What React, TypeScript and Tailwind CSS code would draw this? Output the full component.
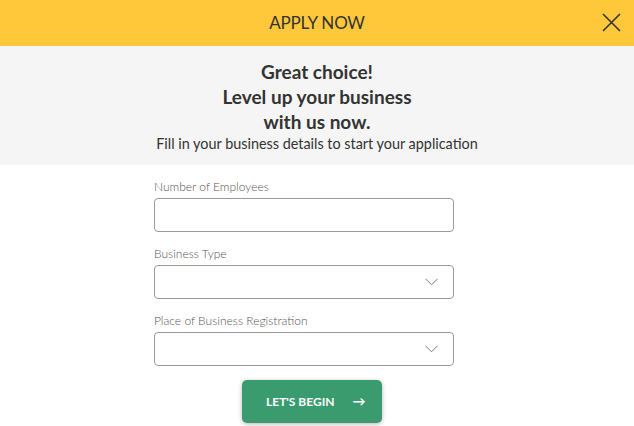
import React from "react";

function Chevron() {
  return (
    <svg width="13" height="8" viewBox="0 0 13 8" fill="none" className="absolute right-[15px] top-1/2 -translate-y-1/2">
      <path d="M0.5 0.8 L6.5 6.8 L12.5 0.8" stroke="#7a7a7a" strokeWidth="1" />
    </svg>
  );
}

function Field({ label, select }: { label: string; select?: boolean }) {
  return (
    <div className="flex flex-col">
      <label className="text-[12px] leading-[14px] font-light text-[#555] mb-[4px]">{label}</label>
      <div className="relative h-[34px] w-[300px] rounded-[4px] border border-[#9a9a9a] bg-white">
        {select && <Chevron />}
      </div>
    </div>
  );
}

export default function App() {
  return (
    <div className="w-[634px] h-[426px] overflow-hidden bg-white" style={{ fontFamily: "Lato, 'Noto Sans', sans-serif" }}>
      <div className="relative h-[46px] bg-[#ffc83b] flex items-center justify-center">
        <span className="text-[17px] text-[#333] tracking-[-0.2px]">APPLY NOW</span>
        <svg width="19" height="19" viewBox="0 0 19 19" className="absolute left-[602px] top-[13px]">
          <path d="M1 1 L18 18 M18 1 L1 18" stroke="#333" strokeWidth="1.6" />
        </svg>
      </div>
      <div className="bg-[#f5f5f5] h-[119px] flex flex-col items-center pt-[13px]">
        <div className="text-[19px] leading-[25px] font-bold text-[#333] text-center">
          Great choice!
          <br />
          Level up your business
          <br />
          with us now.
        </div>
        <div className="text-[14.4px] leading-[17px] text-[#333] mt-[1px]">
          Fill in your business details to start your application
        </div>
      </div>
      <div className="flex flex-col items-start pt-[15px] pl-[154px]">
        <div className="flex flex-col gap-[15px]">
          <Field label="Number of Employees" />
          <Field label="Business Type" select />
          <Field label="Place of Business Registration" select />
        </div>
        <button className="ml-[88px] mt-[14px] h-[43px] w-[140px] rounded-[5px] bg-[#3a9b6f] text-white text-[12px] font-bold flex items-center justify-start pl-[24px] gap-[18px] shadow-[0_1px_4px_rgba(0,0,0,0.3)]">
          <span>LET'S BEGIN</span>
          <span className="text-[13px]">→</span>
        </button>
      </div>
    </div>
  );
}
